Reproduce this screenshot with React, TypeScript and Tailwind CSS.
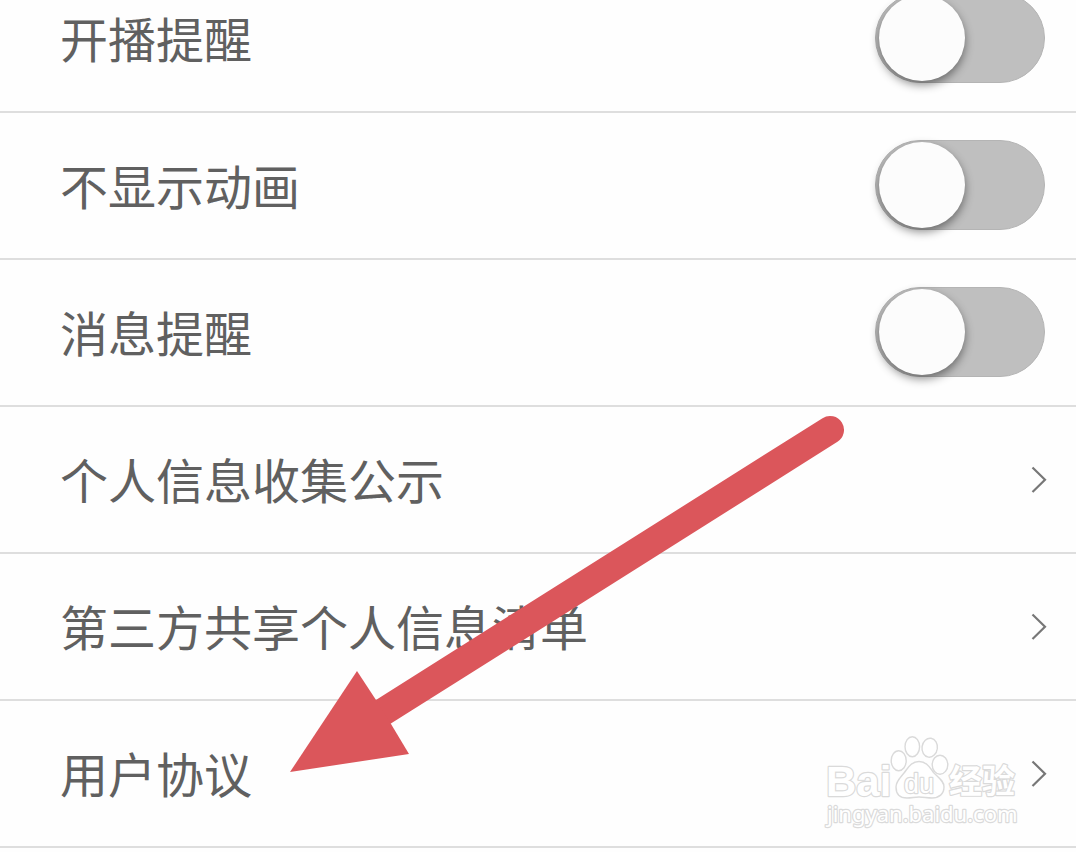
import React, { useState } from "react";

type SwitchItem = {
  id: string;
  label: string;
};

type LinkItem = {
  href: string;
  label: string;
};

const SWITCHES: SwitchItem[] = [
  { id: "live-reminder", label: "开播提醒" },
  { id: "hide-animation", label: "不显示动画" },
  { id: "message-reminder", label: "消息提醒" },
];

const LINKS: LinkItem[] = [
  { href: "#collection", label: "个人信息收集公示" },
  { href: "#third-party", label: "第三方共享个人信息清单" },
  { href: "#agreement", label: "用户协议" },
];

const rowClass =
  "flex min-h-[147px] items-center justify-between border-b-2 border-[#dedede] pb-px pl-[60px]";

function SwitchRow({ id, label }: SwitchItem) {
  const [on, setOn] = useState(false);

  return (
    <li className={`${rowClass} pr-[31px]`}>
      <label htmlFor={id} className="pb-0.5">
        {label}
      </label>
      <input
        id={id}
        type="checkbox"
        role="switch"
        checked={on}
        onChange={(e) => setOn(e.target.checked)}
        className="flex h-[90px] w-[170px] shrink-0 cursor-pointer appearance-none items-center rounded-full border border-[#b4b4b4] bg-[#bfbfbf] px-[3px] before:size-[86px] before:rounded-full before:bg-[#fcfcfc] before:shadow-[0_4px_10px_rgba(0,0,0,0.45)] before:content-[''] checked:justify-end checked:bg-emerald-500"
      />
    </li>
  );
}

function LinkRow({ href, label }: LinkItem) {
  return (
    <li>
      <a href={href} className={`${rowClass} pr-[29px]`}>
        <span className="pb-0.5">{label}</span>
        <svg
          className="h-7 w-4 shrink-0"
          viewBox="0 0 16 28"
          fill="none"
          stroke="#777777"
          strokeWidth="2.2"
          aria-hidden="true"
        >
          <path d="M1.5 2.5 L14 14.7 L1.5 27" />
        </svg>
      </a>
    </li>
  );
}

function Arrow() {
  return (
    <svg
      className="pointer-events-none absolute top-[415px] left-[290px] h-[358px] w-[555px]"
      viewBox="290 415 555 358"
      aria-hidden="true"
    >
      <path d="M383 712 L830 430" stroke="#db565b" strokeWidth="28" strokeLinecap="round" />
      <path d="M290 772 L357 671 L376 700 L391 724 L409 754 Z" fill="#db565b" />
    </svg>
  );
}

function Watermark() {
  return (
    <svg
      className="pointer-events-none absolute top-[732px] right-[54px] h-[100px] w-[202px]"
      viewBox="820 732 202 100"
      fill="#ffffff"
      stroke="#dadada"
      strokeWidth="1.4"
      strokeLinejoin="round"
    >
      <ellipse cx="898.7" cy="760.7" rx="7.5" ry="10" />
      <ellipse cx="912.3" cy="746.7" rx="7.3" ry="10" />
      <ellipse cx="929.7" cy="747.7" rx="7.7" ry="9.5" transform="rotate(8 929.7 747.7)" />
      <ellipse cx="940" cy="764.7" rx="7.8" ry="9.5" />
      <path d="M919 761.5 C927 761.5 930 768 934 773 C939 778 944 781 944 787 C944 794 939 798 932 798 C927 798 924 797 919 797 C914 797 912 798 907 798 C900 798 896 794 896 787 C896 781 900 778 904 773 C908 768 911 761.5 919 761.5 Z" />
      {/* stroke painted first, so only the outer edge of the letters shows */}
      <g paintOrder="stroke" strokeWidth="2.4">
        <text
          x="826"
          y="796"
          fontSize="42"
          className="font-['Liberation_Sans',sans-serif] font-bold"
        >
          Bai
        </text>
        <text x="904" y="793" fontSize="27" className="font-['Liberation_Sans',sans-serif]">
          du
        </text>
        <text
          x="949"
          y="793"
          fontSize="33"
          className="font-['Noto_Sans_CJK_SC',sans-serif] font-bold"
        >
          经验
        </text>
        <text x="827" y="822" fontSize="22" className="font-['Noto_Sans',sans-serif]">
          jingyan.baidu.com
        </text>
      </g>
    </svg>
  );
}

export default function App() {
  return (
    <main className="relative overflow-hidden bg-[#fefefe] pb-1 font-['Noto_Sans_CJK_SC',sans-serif] text-5xl text-[#606060]">
      {/* the list is scrolled a little past its first row */}
      <ul className="-mt-[34px]">
        {SWITCHES.map((item) => (
          <SwitchRow key={item.id} {...item} />
        ))}
        {LINKS.map((item) => (
          <LinkRow key={item.href} {...item} />
        ))}
      </ul>
      <Watermark />
      <Arrow />
    </main>
  );
}
